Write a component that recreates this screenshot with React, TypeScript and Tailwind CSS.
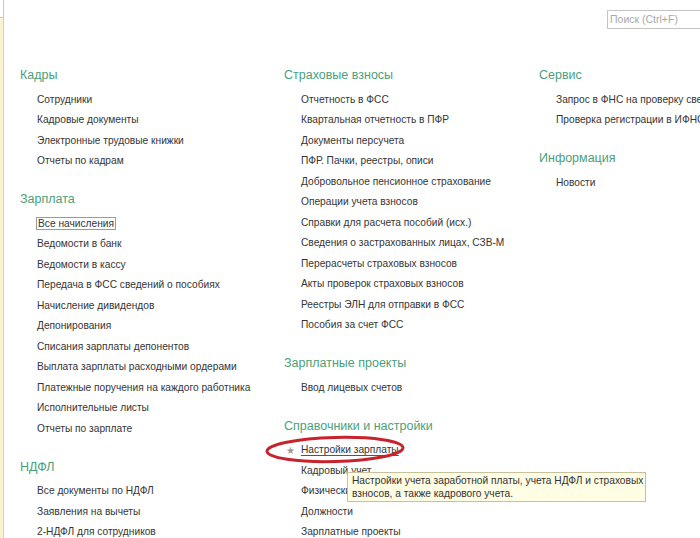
import React from "react"

type Section = { title: string; items: string[] }

const col1: Section[] = [
  {
    title: "Кадры",
    items: ["Сотрудники", "Кадровые документы", "Электронные трудовые книжки", "Отчеты по кадрам"],
  },
  {
    title: "Зарплата",
    items: [
      "Все начисления",
      "Ведомости в банк",
      "Ведомости в кассу",
      "Передача в ФСС сведений о пособиях",
      "Начисление дивидендов",
      "Депонирования",
      "Списания зарплаты депонентов",
      "Выплата зарплаты расходными ордерами",
      "Платежные поручения на каждого работника",
      "Исполнительные листы",
      "Отчеты по зарплате",
    ],
  },
  {
    title: "НДФЛ",
    items: ["Все документы по НДФЛ", "Заявления на вычеты", "2-НДФЛ для сотрудников"],
  },
]

const col2: Section[] = [
  {
    title: "Страховые взносы",
    items: [
      "Отчетность в ФСС",
      "Квартальная отчетность в ПФР",
      "Документы персучета",
      "ПФР. Пачки, реестры, описи",
      "Добровольное пенсионное страхование",
      "Операции учета взносов",
      "Справки для расчета пособий (исх.)",
      "Сведения о застрахованных лицах, СЗВ-М",
      "Перерасчеты страховых взносов",
      "Акты проверок страховых взносов",
      "Реестры ЭЛН для отправки в ФСС",
      "Пособия за счет ФСС",
    ],
  },
  { title: "Зарплатные проекты", items: ["Ввод лицевых счетов"] },
  {
    title: "Справочники и настройки",
    items: ["Настройки зарплаты", "Кадровый учет", "Физические лица", "Должности", "Зарплатные проекты"],
  },
]

const col3: Section[] = [
  {
    title: "Сервис",
    items: ["Запрос в ФНС на проверку сведений", "Проверка регистрации в ИФНС"],
  },
  { title: "Информация", items: ["Новости"] },
]

const Item = ({ label }: { label: string }) => {
  if (label === "Все начисления") {
    return (
      <div className="flex h-[20.5px] items-center pl-[16px]">
        <span className="border border-[#9a9a9a] px-px leading-[11px]">{label}</span>
      </div>
    )
  }
  if (label === "Настройки зарплаты") {
    return (
      <div className="relative flex h-[20.5px] items-center pl-[17px]">
        <span className="absolute left-[2px] top-[3px] text-[10px] text-[#9a9a9a]">★</span>
        <span className="underline decoration-[#555] underline-offset-2">{label}</span>
      </div>
    )
  }
  return <div className="flex h-[20.5px] items-center whitespace-nowrap pl-[17px]">{label}</div>
}

const Column = ({ sections }: { sections: Section[] }) => (
  <div className="flex flex-col gap-[14px]">
    {sections.map((s) => (
      <div key={s.title}>
        <div className="h-[28px] text-[12.5px] leading-[28px] whitespace-nowrap text-[#4a9f7c]">{s.title}</div>
        {s.items.map((it) => (
          <Item key={it} label={it} />
        ))}
      </div>
    ))}
  </div>
)

export default function App() {
  return (
    <div className="relative flex h-[538px] w-[700px] overflow-hidden bg-white font-['Liberation_Sans',Arial,sans-serif] text-[10.2px] text-[#353535]">
      <div className="flex w-[4px] shrink-0 flex-col">
        <div className="h-[18px] border-r border-b border-[#c8c8c8] bg-white" />
        <div className="flex-1 border-r border-[#d6d0b8] bg-[#fbf2d2]" />
      </div>

      <div className="flex flex-1 flex-col">
        <div className="pt-[10px] pl-[603px]">
          <div className="flex h-[19px] w-[120px] shrink-0 items-center border border-[#c4c4c4] pl-[2px] text-[10.5px] text-[#a8a8a8]">
            Поиск (Ctrl+F)
          </div>
        </div>

        <div className="mt-[32px] grid grid-cols-[264px_255px_1fr] pl-[16px]">
          <Column sections={col1} />
          <Column sections={col2} />
          <Column sections={col3} />
        </div>
      </div>

      <svg className="absolute left-[264px] top-[434px]" width="144" height="32" viewBox="0 0 144 32">
        <ellipse cx="71" cy="15.5" rx="68" ry="12" fill="none" stroke="#c8232c" strokeWidth="3" transform="rotate(-1.5 71 15.5)" />
      </svg>

      <div className="absolute left-[347px] top-[472px] h-[30px] w-[299px] border border-[#c9bf9c] bg-[#fffde3] px-[4px] pt-[2px] text-[10.2px] leading-[12.5px] whitespace-nowrap text-[#333]">
        <div>Настройки учета заработной платы, учета НДФЛ и страховых</div>
        <div>взносов, а также кадрового учета.</div>
      </div>
    </div>
  )
}
